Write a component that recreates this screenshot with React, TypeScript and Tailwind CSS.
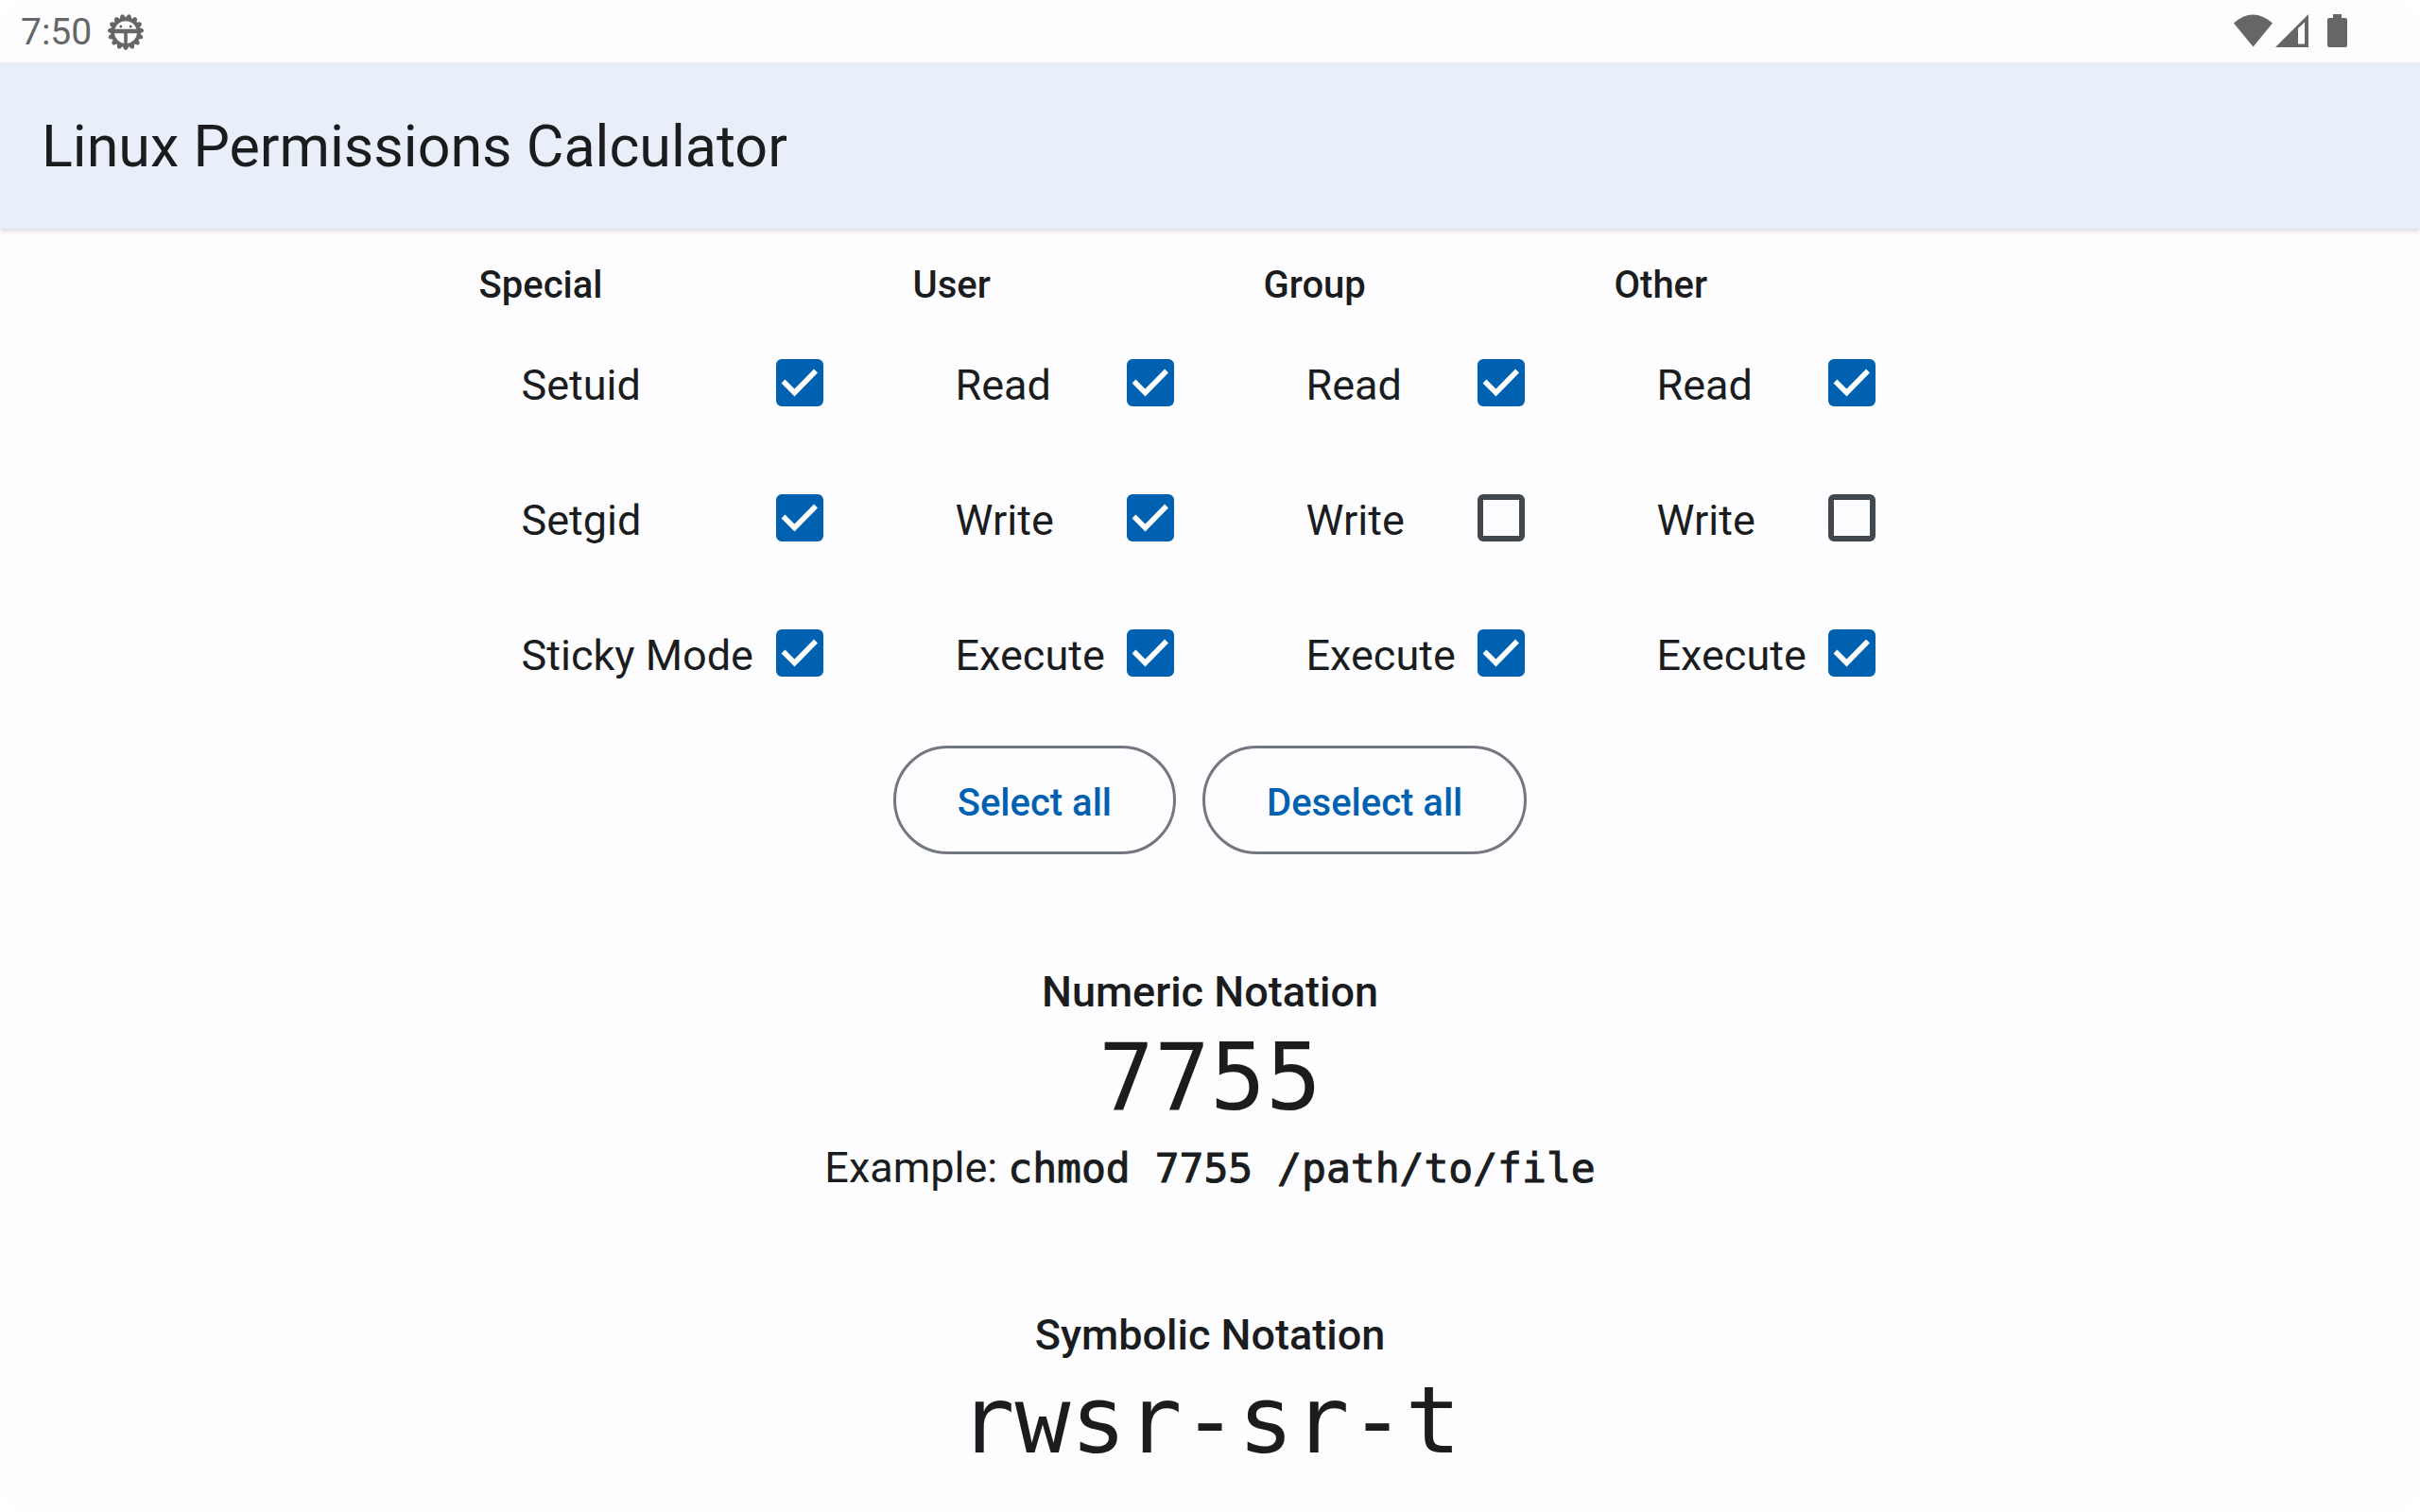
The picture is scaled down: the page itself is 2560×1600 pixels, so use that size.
import { useState } from "react";

type Column = { title: string; key: string; labels: string[] };

const COLUMNS: Column[] = [
  { title: "Special", key: "special", labels: ["Setuid", "Setgid", "Sticky Mode"] },
  { title: "User", key: "user", labels: ["Read", "Write", "Execute"] },
  { title: "Group", key: "group", labels: ["Read", "Write", "Execute"] },
  { title: "Other", key: "other", labels: ["Read", "Write", "Execute"] },
];

const INITIAL: boolean[][] = [
  [true, true, true],
  [true, true, true],
  [true, false, true],
  [true, false, true],
];

function numeric(bits: boolean[][]) {
  return bits.map(([a, b, c]) => (a ? 4 : 0) + (b ? 2 : 0) + (c ? 1 : 0)).join("");
}

function symbolic(bits: boolean[][]) {
  const [special, ...rest] = bits;
  return rest
    .map(([r, w, x], i) => {
      const letter = i === 2 ? "t" : "s";
      const last = special[i] ? (x ? letter : letter.toUpperCase()) : x ? "x" : "-";
      return (r ? "r" : "-") + (w ? "w" : "-") + last;
    })
    .join("");
}

function GearIcon() {
  const teeth = Array.from({ length: 15 }, (_, i) => 180 + i * 24);
  return (
    <svg className="size-10" viewBox="-20 -20 40 40" fill="#666666" aria-hidden="true">
      {teeth.map((a) => (
        <path key={a} d="M-3.6 -14L-1.9 -18Q0 -20.2 1.9 -18L3.6 -14Z" transform={`rotate(${a})`} />
      ))}
      <path
        fillRule="evenodd"
        d="M0 -15.5A15.5 15.5 0 1 1 0 15.5A15.5 15.5 0 1 1 0 -15.5ZM-11.5 -3.2H11.5A12 12 0 0 0 -11.5 -3.2ZM-12 1.2A12 12 0 0 0 -1.8 12V1.2ZM12 1.2A12 12 0 0 1 1.8 12V1.2Z"
      />
      <circle cx="-5.2" cy="-6" r="1.5" />
      <circle cx="5.2" cy="-6" r="1.5" />
    </svg>
  );
}

function StatusBar() {
  return (
    <div className="flex h-[66px] items-center justify-between pr-[76px] pl-[22px] text-[#666666]">
      <div className="flex items-center gap-4 pt-[2px]">
        <span className="text-[39px] leading-none">7:50</span>
        <GearIcon />
      </div>
      <svg className="h-9 w-[122px]" viewBox="0 0 122 36" fill="#666666" aria-hidden="true">
        <path d="M1 9.5Q21 -8.5 42 9.5L21.5 34.5Z" />
        <path fillRule="evenodd" d="M45 35L80 0V35ZM69 15V31.5H76V8.5Z" />
        <path d="M106 0H115V4H119Q121 4 121 6V33Q121 35 119 35H102Q100 35 100 33V6Q100 4 102 4H106Z" />
      </svg>
    </div>
  );
}

function PermissionBox({ label, checked, onChange }: { label: string; checked: boolean; onChange: () => void }) {
  return (
    <label className="flex h-[143px] items-center justify-between pr-[95px] pl-[45px]">
      <span className="pt-[6px] text-[45px] leading-[60px] whitespace-nowrap">{label}</span>
      <span className="grid shrink-0">
        <input
          type="checkbox"
          checked={checked}
          onChange={onChange}
          className="col-start-1 row-start-1 size-[50px] appearance-none rounded-[6px] border-[6px] border-[#43474e] checked:border-[#0061b1] checked:bg-[#0061b1]"
        />
        {checked && (
          <svg
            className="pointer-events-none col-start-1 row-start-1 size-[50px]"
            viewBox="0 0 50 50"
            fill="none"
            stroke="#ffffff"
            strokeWidth="5.5"
            aria-hidden="true"
          >
            <path d="M7.5 23.5L19.5 35.5L42 12.5" />
          </svg>
        )}
      </span>
    </label>
  );
}

function ActionButton({ children, onClick }: { children: string; onClick: () => void }) {
  return (
    <button
      type="button"
      onClick={onClick}
      className="h-[115px] rounded-full border-[3px] border-[#73777f] px-[65px] pt-[6px] text-[40px] font-medium text-[#0061b1]"
    >
      {children}
    </button>
  );
}

export default function App() {
  const [bits, setBits] = useState(INITIAL);
  const toggle = (c: number, r: number) =>
    setBits(bits.map((col, i) => col.map((v, j) => (i === c && j === r ? !v : v))));
  const setAll = (v: boolean) => setBits(bits.map((col) => col.map(() => v)));
  const mode = numeric(bits);

  return (
    <div className="min-h-screen bg-white font-[Roboto,sans-serif] text-[#1a1c1e]">
      <div className="min-h-screen rounded-[32px] bg-[#fdfcff]">
        <StatusBar />
        <header className="flex h-[176px] items-center bg-[#e8eff9] px-[44px] pt-[2px] shadow-[0_3px_5px_rgba(0,0,0,0.12)]">
          <h1 className="text-[61px] leading-[80px]">Linux Permissions Calculator</h1>
        </header>
        <main className="flex flex-col items-center pt-[29px]">
          <div className="flex pl-[25px]">
            {COLUMNS.map((col, c) => (
              <fieldset key={col.key} className="w-[371px] first:w-[459px]">
                <legend className="text-[40px] leading-[62px] font-medium">{col.title}</legend>
                {col.labels.map((label, r) => (
                  <PermissionBox key={label} label={label} checked={bits[c][r]} onChange={() => toggle(c, r)} />
                ))}
              </fieldset>
            ))}
          </div>
          <div className="mt-[27px] flex gap-7">
            <ActionButton onClick={() => setAll(true)}>Select all</ActionButton>
            <ActionButton onClick={() => setAll(false)}>Deselect all</ActionButton>
          </div>
          <section className="mt-[113px] flex flex-col items-center">
            <h2 className="text-[45px] leading-[66px] font-medium">Numeric Notation</h2>
            <output className="pt-[2px] font-['DejaVu_Sans_Mono',monospace] text-[98px] leading-[110px]">{mode}</output>
            <p className="text-[45px] leading-[82px]">
              Example:{" "}
              <code className="font-['DejaVu_Sans_Mono',monospace] text-[43px] [-webkit-text-stroke:1px_#1a1c1e]">
                chmod {mode} /path/to/file
              </code>
            </p>
          </section>
          <section className="mt-[103px] flex flex-col items-center">
            <h2 className="text-[45px] leading-[66px] font-medium">Symbolic Notation</h2>
            <output className="pt-[2px] font-['DejaVu_Sans_Mono',monospace] text-[98px] leading-[110px]">
              {symbolic(bits)}
            </output>
          </section>
        </main>
      </div>
    </div>
  );
}
